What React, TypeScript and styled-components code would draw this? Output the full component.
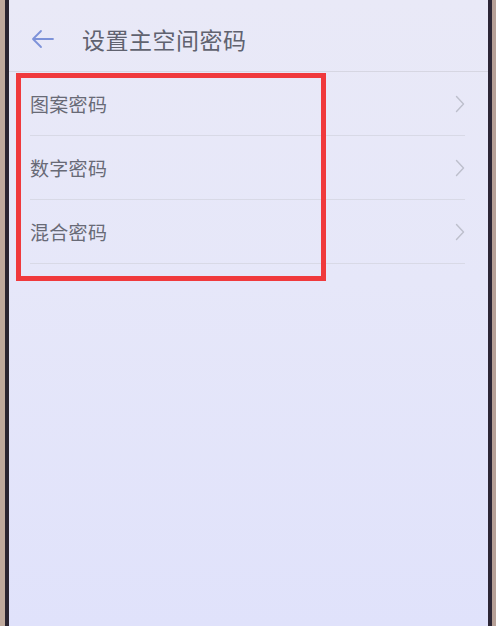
import styled, { createGlobalStyle } from "styled-components";

const GlobalStyle = createGlobalStyle`
  html, body {
    margin: 0;
    padding: 0;
    background: #b9a79c;
  }
  body {
    font-family: "Noto Sans CJK SC", "Noto Sans", sans-serif;
  }
`;

const items = ["图案密码", "数字密码", "混合密码"];

export default function App() {
  return (
    <>
      <GlobalStyle />
      <Phone>
        <Bezel side="left" />
        <Screen>
          <Header>
            <BackButton aria-label="返回">
              <svg width="24" height="20" viewBox="0 0 24 20" fill="none">
                <path d="M22 10H3M10 2L2 10l8 8" stroke="#7d92d9" strokeWidth="1.8" strokeLinecap="round" strokeLinejoin="round" />
              </svg>
            </BackButton>
            <Title>设置主空间密码</Title>
          </Header>
          <List>
            {items.map((label) => (
              <Row key={label}>
                <Label>{label}</Label>
                <svg width="10" height="18" viewBox="0 0 10 18" fill="none">
                  <path d="M1.5 1.5L8.5 9l-7 7.5" stroke="#bdbfcc" strokeWidth="1.4" strokeLinecap="round" strokeLinejoin="round" />
                </svg>
              </Row>
            ))}
            <Highlight />
          </List>
        </Screen>
        <Bezel side="right" />
      </Phone>
    </>
  );
}

const Phone = styled.div`
  display: flex;
  width: 496px;
  height: 626px;
  overflow: hidden;
`;

const Bezel = styled.div<{ side: "left" | "right" }>`
  flex: 0 0 ${(p) => (p.side === "left" ? "9px" : "8px")};
  background: ${(p) =>
    p.side === "left"
      ? "linear-gradient(90deg, #bfa99c 0 5px, #2a2430 5px 9px)"
      : "linear-gradient(90deg, #2c2636 0 4px, #b6a097 4px 8px)"};
`;

const Screen = styled.div`
  flex: 1;
  display: flex;
  flex-direction: column;
  background: linear-gradient(180deg, #e9e9f7 0%, #e6e7f9 45%, #e0e2fb 100%);
`;

const Header = styled.header`
  height: 72px;
  display: flex;
  align-items: center;
  gap: 27px;
  padding: 6px 0 0 22px;
  box-sizing: border-box;
  border-bottom: 1px solid #d6d6e2;
`;

const BackButton = styled.button`
  border: 0;
  background: none;
  padding: 0;
  display: flex;
  align-items: center;
`;

const Title = styled.h1`
  margin: 0;
  font-size: 23px;
  font-weight: 400;
  letter-spacing: 0.5px;
  color: #60626f;
`;

const List = styled.ul`
  position: relative;
  list-style: none;
  margin: 0;
  padding: 0 23px 0 21px;
`;

const Row = styled.li`
  height: 63px;
  display: flex;
  align-items: center;
  justify-content: space-between;
  border-bottom: 1px solid #d8d9e6;
`;

const Label = styled.span`
  font-size: 19px;
  color: #686a76;
  letter-spacing: 0.3px;
`;

const Highlight = styled.div`
  position: absolute;
  left: 7px;
  top: 1px;
  width: 300px;
  height: 198px;
  border: 5px solid #f0393c;
  pointer-events: none;
`;
